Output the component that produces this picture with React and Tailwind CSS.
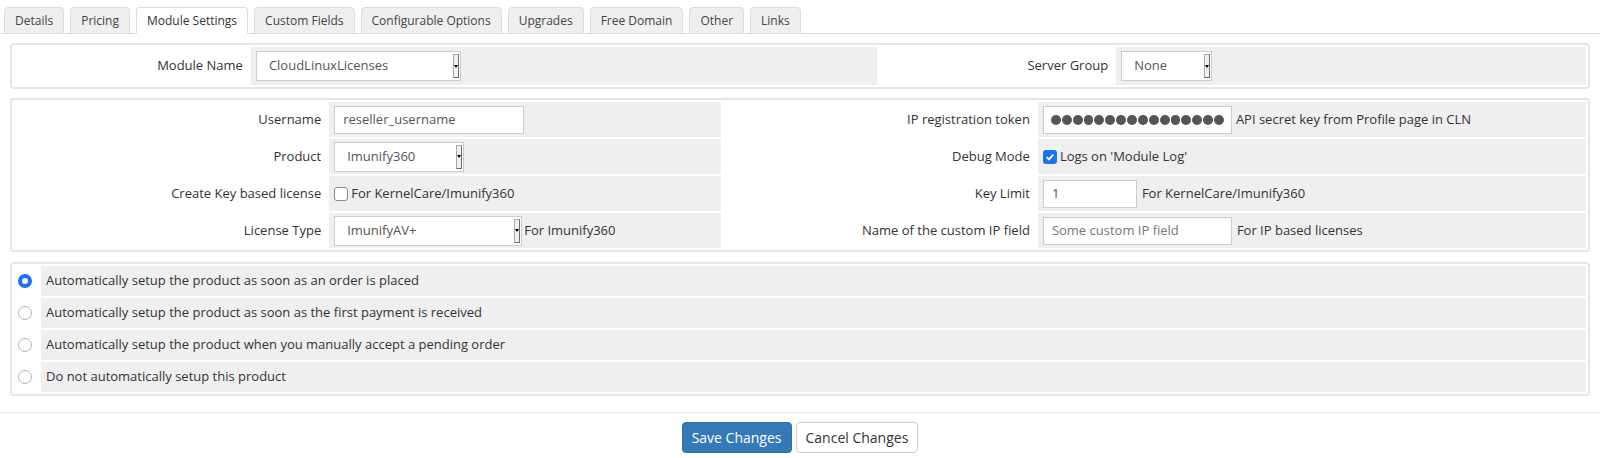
import { useState } from 'react'

const TABS = ['Details', 'Pricing', 'Module Settings', 'Custom Fields', 'Configurable Options', 'Upgrades', 'Free Domain', 'Other', 'Links']

const AUTO_SETUP = [
  'Automatically setup the product as soon as an order is placed',
  'Automatically setup the product as soon as the first payment is received',
  'Automatically setup the product when you manually accept a pending order',
  'Do not automatically setup this product',
]

function Select({ value, w }) {
  return (
    <div className={`flex h-[30px] items-stretch border border-[#ccc] bg-white ${w}`}>
      <span className="flex flex-1 items-center pl-[12px] text-[#555]">{value}</span>
      <span className="my-[2px] mr-[1px] flex w-[6px] items-center justify-center border border-[#a9a9a9] border-b-[#6d6d6d] border-r-[#6d6d6d] bg-[#f0f0f0]">
        <span className="h-0 w-0 border-x-[2px] border-t-[3px] border-x-transparent border-t-black" />
      </span>
    </div>
  )
}

function Input({ value, w, muted }) {
  return (
    <div className={`flex h-[28px] items-center border border-[#ccc] bg-white px-[8px] ${muted ? 'text-[#777]' : 'text-[#555]'} ${w}`}>
      {value}
    </div>
  )
}

function Box({ checked }) {
  return checked ? (
    <span className="mr-[3px] flex h-[14px] w-[14px] items-center justify-center rounded-[3px] bg-[#1a73e8]">
      <svg width="10" height="10" viewBox="0 0 10 10">
        <path d="M1.8 5.2 L4 7.4 L8.3 2.6" fill="none" stroke="#fff" strokeWidth="1.8" />
      </svg>
    </span>
  ) : (
    <span className="mr-[3px] h-[14px] w-[14px] rounded-[3px] border border-[#8a8a8a] bg-white" />
  )
}

function Label({ children }) {
  return <td className="pr-[6px] text-right text-[#333]">{children}</td>
}

function Field({ children }) {
  return (
    <td className="bg-[#efefef] px-[5px]">
      <div className="flex items-center gap-[4px]">{children}</div>
    </td>
  )
}

export default function App() {
  const [setup, setSetup] = useState(0)

  return (
    <div className="h-[458px] w-[1600px] overflow-hidden bg-white text-[13px] text-[#333]" style={{ fontFamily: '"Open Sans", "Liberation Sans", sans-serif' }}>
      {/* tabs */}
      <div className="flex items-end gap-[6px] border-b border-[#ddd] px-[4px] pt-[7px]">
        {TABS.map(t => (
          <div
            key={t}
            className={`-mb-px flex h-[27px] items-center rounded-t-[4px] border border-[#ddd] px-[10px] text-[12px] ${
              t === 'Module Settings' ? 'border-b-white bg-white text-[#333]' : 'bg-[#efefef] text-[#444]'
            }`}
          >
            {t}
          </div>
        ))}
      </div>

      {/* module */}
      <div className="mx-[10px] mt-[9px] rounded-[4px] border-2 border-[#e0e6ea]">
        <table className="w-full table-fixed border-separate border-spacing-[2px]">
          <colgroup>
            <col className="w-[15%]" />
            <col className="w-[40%]" />
            <col className="w-[15%]" />
            <col className="w-[30%]" />
          </colgroup>
          <tbody>
            <tr className="h-[38px]">
              <Label>Module Name</Label>
              <Field><Select value="CloudLinuxLicenses" w="w-[205px]" /></Field>
              <Label>Server Group</Label>
              <Field><Select value="None" w="w-[91px]" /></Field>
            </tr>
          </tbody>
        </table>
      </div>

      {/* settings */}
      <div className="mx-[10px] mt-[9px] rounded-[4px] border-2 border-[#e0e6ea]">
        <table className="w-full table-fixed border-separate border-spacing-[2px]">
          <colgroup>
            <col className="w-[20%]" />
            <col className="w-[25%]" />
            <col className="w-[20%]" />
            <col className="w-[35%]" />
          </colgroup>
          <tbody>
            <tr className="h-[35px]">
              <Label>Username</Label>
              <Field><Input value="reseller_username" w="w-[190px]" /></Field>
              <Label>IP registration token</Label>
              <Field>
                <div className="flex h-[28px] w-[189px] items-center gap-[1px] border border-[#ccc] bg-white px-[7px]">
                  {Array.from({ length: 16 }).map((_, i) => (
                    <span key={i} className="h-[10px] w-[10px] rounded-full bg-[#555]" />
                  ))}
                </div>
                <span>API secret key from Profile page in CLN</span>
              </Field>
            </tr>
            <tr className="h-[35px]">
              <Label>Product</Label>
              <Field><Select value="Imunify360" w="w-[130px]" /></Field>
              <Label>Debug Mode</Label>
              <Field><span className="flex items-center"><Box checked />Logs on 'Module Log'</span></Field>
            </tr>
            <tr className="h-[35px]">
              <Label>Create Key based license</Label>
              <Field><span className="flex items-center"><Box />For KernelCare/Imunify360</span></Field>
              <Label>Key Limit</Label>
              <Field><Input value="1" w="w-[94px]" /><span className="ml-[1px]">For KernelCare/Imunify360</span></Field>
            </tr>
            <tr className="h-[35px]">
              <Label>License Type</Label>
              <Field><Select value="ImunifyAV+" w="w-[188px]" /><span className="-ml-[2px]">For Imunify360</span></Field>
              <Label>Name of the custom IP field</Label>
              <Field><Input value="Some custom IP field" w="w-[189px]" muted /><span className="ml-[1px]">For IP based licenses</span></Field>
            </tr>
          </tbody>
        </table>
      </div>

      {/* auto setup */}
      <div className="mx-[10px] mt-[10px] rounded-[4px] border-2 border-[#e0e6ea]">
        <table className="w-full border-separate border-spacing-[2px]">
          <tbody>
            {AUTO_SETUP.map((txt, i) => (
              <tr key={txt} className="h-[30px] cursor-pointer" onClick={() => setSetup(i)}>
                <td className="w-[25px] pl-[4px]">
                  <span
                    className={`block h-[14px] w-[14px] rounded-full ${
                      setup === i ? 'border-[4px] border-[#1a73e8] bg-white' : 'border border-[#b5b5b5] bg-white'
                    }`}
                  />
                </td>
                <td className="bg-[#efefef] pl-[5px] text-[#333]">{txt}</td>
              </tr>
            ))}
          </tbody>
        </table>
      </div>

      {/* buttons */}
      <div className="mt-[16px] flex justify-center gap-[4px] border-t border-[#e3e3e3] pt-[9px]">
        <button className="h-[31px] rounded-[4px] border border-[#2e6da4] bg-[#337ab7] px-[9px] text-[14px] text-white">Save Changes</button>
        <button className="h-[31px] rounded-[4px] border border-[#ccc] bg-white px-[9px] text-[14px] text-[#333]">Cancel Changes</button>
      </div>
    </div>
  )
}
